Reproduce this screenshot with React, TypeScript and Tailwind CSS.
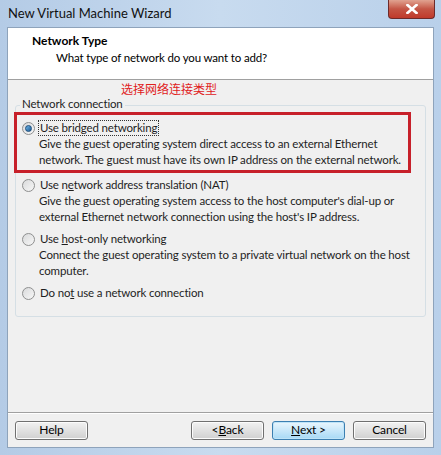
import React from "react";

const font = { fontFamily: 'Lato, "Noto Sans", sans-serif' };

function Radio({ checked }: { checked?: boolean }) {
  return (
    <span className="relative flex h-[13px] w-[13px] shrink-0 items-center justify-center rounded-full border border-[#8e8f8f] bg-gradient-to-br from-[#d9dadb] to-[#f7f7f7]">
      {checked && (
        <span className="h-[7px] w-[7px] rounded-full border border-[#1a4c7a] bg-gradient-to-br from-[#6fb6e9] to-[#1d5c95]" />
      )}
    </span>
  );
}

interface OptionProps {
  label: React.ReactNode;
  desc?: string[];
  checked?: boolean;
  focused?: boolean;
}

function Option({ label, desc, checked, focused }: OptionProps) {
  return (
    <div className="flex flex-col">
      <div className="flex h-[16px] items-center gap-[3px]">
        <Radio checked={checked} />
        <span
          className={
            focused
              ? "border border-dotted border-[#333] px-[1px] leading-[14px]"
              : "px-[2px] leading-[16px]"
          }
        >
          {label}
        </span>
      </div>
      {desc && (
        <div className="pl-[17px] leading-[15.5px]">
          {desc.map((d) => (
            <div key={d} className="whitespace-nowrap">{d}</div>
          ))}
        </div>
      )}
    </div>
  );
}

function Button({ children, primary }: { children: React.ReactNode; primary?: boolean }) {
  return (
    <button
      className={
        "flex h-[19px] w-[73px] items-center justify-center rounded-[3px] border text-[12px] text-black " +
        (primary
          ? "border-[#3c7fb1] bg-gradient-to-b from-[#eaf6fd] to-[#a7d9f5] shadow-[inset_0_0_0_1px_#bfe4f8]"
          : "border-[#707070] bg-gradient-to-b from-[#f2f2f2] to-[#d0d0d0] shadow-[inset_0_0_0_1px_#fcfcfc]")
      }
    >
      {children}
    </button>
  );
}

export default function App() {
  return (
    <div
      className="flex h-[455px] w-[441px] flex-col bg-gradient-to-r from-[#b4cbe6] via-[#c8dbef] to-[#b9d0ea] text-[11.5px] tracking-[-0.15px] text-[#1e1e1e]"
      style={font}
    >
      {/* title bar */}
      <div className="relative flex h-[27px] shrink-0 items-center pl-[8px]">
        <span className="pt-[1px] text-[13px] tracking-normal text-[#111]">New Virtual Machine Wizard</span>
        <div className="absolute right-[6px] top-0 flex h-[19px] w-[47px] items-center justify-center rounded-b-[4px] border border-t-0 border-[#6d2a2a] bg-gradient-to-b from-[#e0a291] via-[#c45545] to-[#c0392b]">
          <svg width="12" height="10" viewBox="0 0 12 10">
            <path d="M1.5 1 L10.5 9 M10.5 1 L1.5 9" stroke="#fff" strokeWidth="2.6" strokeLinecap="square" />
          </svg>
        </div>
      </div>

      {/* client */}
      <div className="mx-[7px] flex flex-1 flex-col border border-[#8ea3bb] bg-[#f0f0f0]">
        <div className="flex h-[52px] shrink-0 flex-col border-b border-[#a0a0a0] bg-white pl-[24px] pt-[5px]">
          <div className="text-[12px] font-bold leading-[16px] tracking-normal text-black">Network Type</div>
          <div className="pl-[24px] pt-[1px] leading-[16px] text-black">
            What type of network do you want to add?
          </div>
        </div>

        <div className="flex flex-1 flex-col px-[7px]">
          <div
            className="pl-[106px] pt-[1px] text-[12px] leading-[16px] tracking-normal text-[#e0201c]"
            style={{ fontFamily: '"Noto Sans CJK SC", sans-serif' }}
          >
            选择网络连接类型
          </div>
          <div className="relative mt-[8px] h-[212px] rounded-[3px] border border-[#d5dfe5]">
            <span className="absolute -top-[10px] left-[4px] bg-[#f0f0f0] px-[2px] leading-[16px]">
              Network connection
            </span>
            <div className="-ml-[2px] mr-[14px] mt-[6px] flex flex-col">
              <div className="border-[3px] border-[#c7202a] pb-[3px] pl-[5px] pt-[5px]">
                <Option
                  checked
                  focused
                  label="Use bridged networking"
                  desc={[
                    "Give the guest operating system direct access to an external Ethernet",
                    "network. The guest must have its own IP address on the external network.",
                  ]}
                />
              </div>
            </div>
            <div className="flex flex-col gap-[7px] pl-[6px] pt-[4px]">
              <Option
                label={
                  <>
                    Use n<u>e</u>twork address translation (NAT)
                  </>
                }
                desc={[
                  "Give the guest operating system access to the host computer's dial-up or",
                  "external Ethernet network connection using the host's IP address.",
                ]}
              />
              <Option
                label={
                  <>
                    Use <u>h</u>ost-only networking
                  </>
                }
                desc={[
                  "Connect the guest operating system to a private virtual network on the host",
                  "computer.",
                ]}
              />
              <Option
                label={
                  <>
                    Do no<u>t</u> use a network connection
                  </>
                }
              />
            </div>
          </div>
        </div>

        <div className="border-t border-[#a0a0a0] shadow-[0_1px_0_#fff]" />
        <div className="flex h-[34px] shrink-0 items-center px-[7px]">
          <Button>Help</Button>
          <div className="flex-1" />
          <div className="flex gap-[8px]">
            <Button>
              &lt; <u>B</u>ack
            </Button>
            <Button primary>
              <u>N</u>ext &gt;
            </Button>
            <Button>Cancel</Button>
          </div>
        </div>
      </div>
      <div className="h-[7px] shrink-0" />
    </div>
  );
}
